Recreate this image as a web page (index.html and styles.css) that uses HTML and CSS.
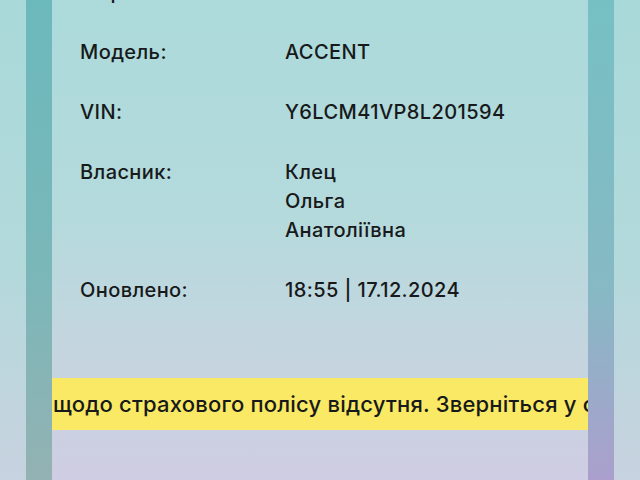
FILE: index.html
```html
<!DOCTYPE html>
<html lang="uk">
<head>
<meta charset="utf-8">
<link rel="stylesheet" href="styles.css">
</head>
<body>
<div class="screen">
  <div class="gutter"></div>
  <div class="strip strip-left"></div>
  <main class="card">
    <dl class="info">
      <div class="row"><dt>Марка:</dt><dd>HYUNDAI</dd></div>
      <div class="row"><dt>Модель:</dt><dd>ACCENT</dd></div>
      <div class="row"><dt>VIN:</dt><dd>Y6LCM41VP8L201594</dd></div>
      <div class="row"><dt>Власник:</dt><dd>Клец<br>Ольга<br>Анатоліївна</dd></div>
      <div class="row"><dt>Оновлено:</dt><dd>18:55 | 17.12.2024</dd></div>
    </dl>
    <div class="banner"><span class="banner-text">щодо страхового полісу відсутня. Зверніться у страхову компанію</span></div>
  </main>
  <div class="strip strip-right"></div>
  <div class="gutter"></div>
</div>
</body>
</html>
```
FILE: styles.css
```css
html, body {
  margin: 0;
  padding: 0;
}
body {
  width: 640px;
  height: 480px;
  overflow: hidden;
  font-family: Inter, "Liberation Sans", sans-serif;
  color: #17191a;
  background: linear-gradient(180deg, #a9d9d9 0%, #b3d9db 55%, #c8d2e0 100%);
}
.screen {
  display: flex;
  height: 480px;
}
.gutter {
  width: 26px;
  flex: none;
}
.strip {
  width: 26px;
  flex: none;
}
.strip-left {
  background: linear-gradient(180deg, #6cb9bc 0%, #7ab7b9 55%, #93b2b3 100%);
}
.strip-right {
  background: linear-gradient(180deg, #76c0c3 0%, #86b9c4 60%, #ab9fcd 100%);
}
.card {
  flex: 1;
  display: flex;
  flex-direction: column;
  overflow: hidden;
  background: linear-gradient(180deg, #acdadb 0%, #b4dadc 45%, #c3d6df 70%, #cfcde3 100%);
}
.info {
  margin: -22px 0 0 0;
  padding: 0 0 0 28px;
  display: flex;
  flex-direction: column;
  gap: 31px;
}
.row {
  display: grid;
  grid-template-columns: 205px 1fr;
  font-size: 20px;
  font-weight: 500;
  letter-spacing: 0.4px;
  line-height: 29px;
}
.row dt, .row dd {
  margin: 0;
}
.banner {
  margin-top: 73px;
  height: 52px;
  background: #f9e965;
  display: flex;
  align-items: center;
  white-space: nowrap;
  overflow: hidden;
}
.banner-text {
  font-size: 22px;
  font-weight: 500;
  letter-spacing: 0.2px;
  padding-left: 1px;
}
```
